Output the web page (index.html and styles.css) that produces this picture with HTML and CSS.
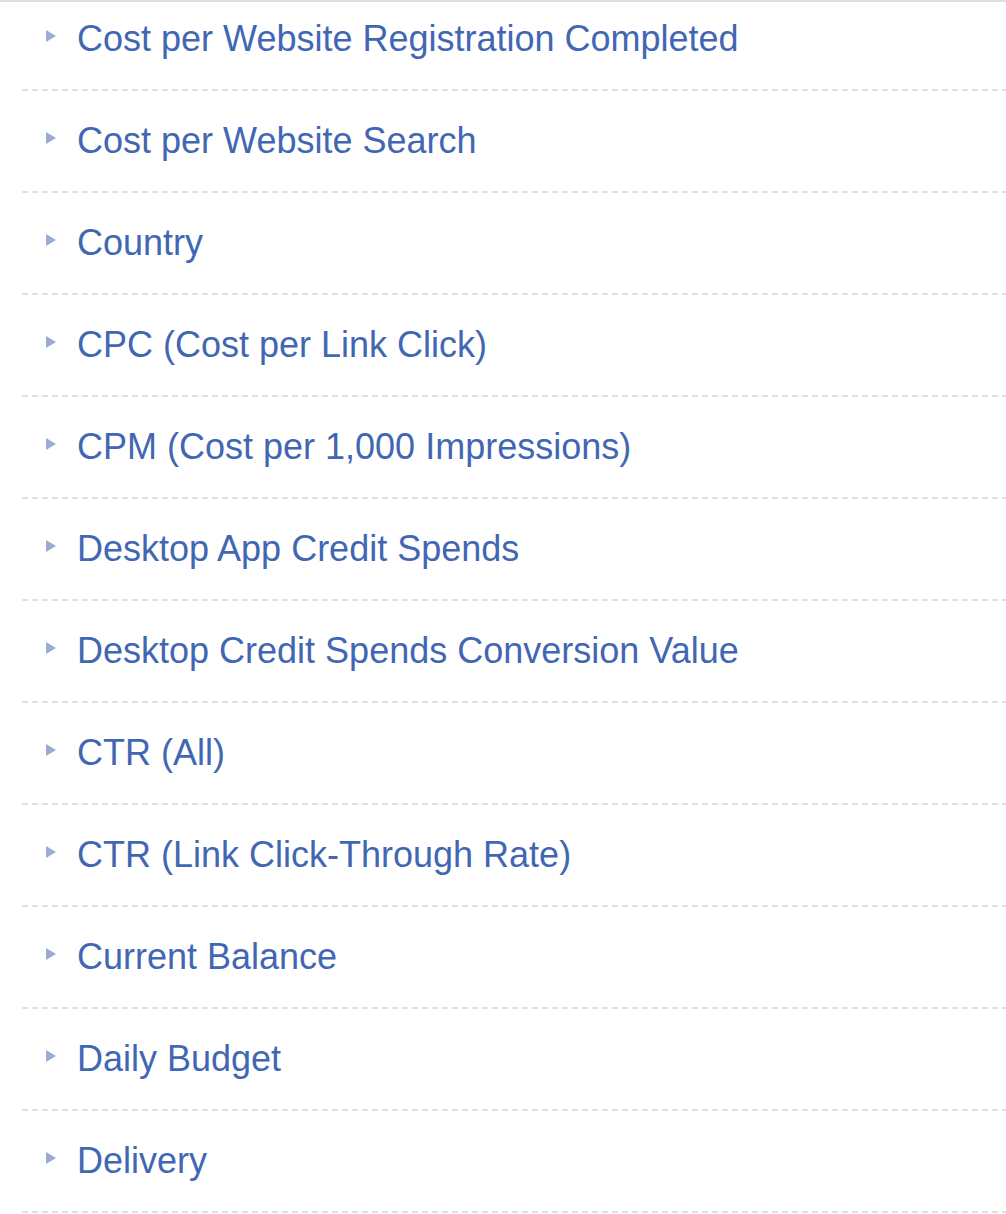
FILE: index.html
```html
<!DOCTYPE html>
<html lang="en">
<head>
<meta charset="utf-8">
<title>Columns</title>
<link rel="stylesheet" href="styles.css">
</head>
<body>
<div class="topbar"></div>
<ul class="metric-list">
  <li class="metric"><span class="arrow"></span><span class="label">Cost per Website Registration Completed</span></li>
  <li class="metric"><span class="arrow"></span><span class="label">Cost per Website Search</span></li>
  <li class="metric"><span class="arrow"></span><span class="label">Country</span></li>
  <li class="metric"><span class="arrow"></span><span class="label">CPC (Cost per Link Click)</span></li>
  <li class="metric"><span class="arrow"></span><span class="label">CPM (Cost per 1,000 Impressions)</span></li>
  <li class="metric"><span class="arrow"></span><span class="label">Desktop App Credit Spends</span></li>
  <li class="metric"><span class="arrow"></span><span class="label">Desktop Credit Spends Conversion Value</span></li>
  <li class="metric"><span class="arrow"></span><span class="label">CTR (All)</span></li>
  <li class="metric"><span class="arrow"></span><span class="label">CTR (Link Click-Through Rate)</span></li>
  <li class="metric"><span class="arrow"></span><span class="label">Current Balance</span></li>
  <li class="metric"><span class="arrow"></span><span class="label">Daily Budget</span></li>
  <li class="metric"><span class="arrow"></span><span class="label">Delivery</span></li>
</ul>
</body>
</html>
```

FILE: styles.css
```css
html, body {
  margin: 0;
  padding: 0;
  background: #ffffff;
}

body {
  font-family: "Liberation Sans", Arial, Helvetica, sans-serif;
  overflow: hidden;
}

.topbar {
  height: 2px;
  background: #dddfe2;
}

.metric-list {
  list-style: none;
  margin: 0 0 0 22px;
  padding: 0;
}

.metric {
  display: flex;
  align-items: flex-start;
  padding: 29px 0 31px 24px;
  background: repeating-linear-gradient(90deg, #dddfe2 0 6px, transparent 6px 10px) left bottom / 100% 2px no-repeat;
}

.metric:first-child {
  padding-top: 16px;
}

.arrow {
  width: 0;
  height: 0;
  margin-top: 12px;
  border-left: 10px solid #9aacd4;
  border-top: 6.5px solid transparent;
  border-bottom: 6.5px solid transparent;
  flex: none;
}

.label {
  margin-left: 21px;
  font-size: 36px;
  line-height: 42px;
  color: #4267b2;
  white-space: nowrap;
}
```
